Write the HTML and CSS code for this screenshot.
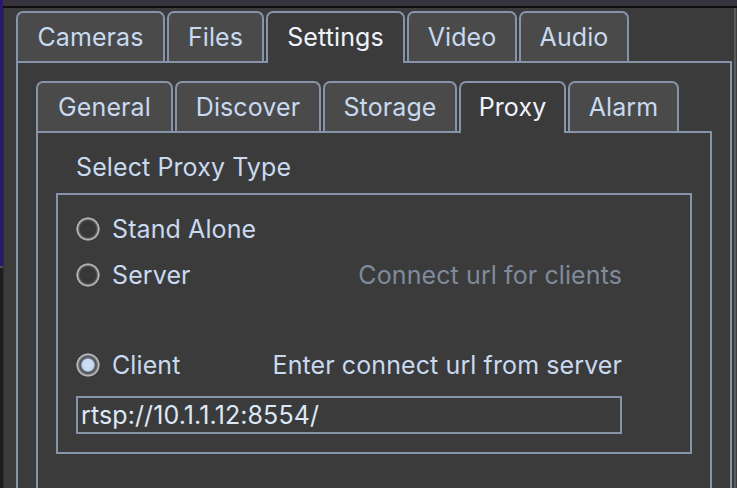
FILE: index.html
```html
<!DOCTYPE html>
<html>
<head>
<meta charset="utf-8">
<link rel="stylesheet" href="styles.css">
</head>
<body>
<div class="edge-left"><div class="edge-purple"></div><div class="edge-dark"></div></div>
<div class="app">
  <div class="titlebar"></div>
  <div class="workspace">
    <div class="content">
      <div class="tabs main-tabs">
        <div class="tab">Cameras</div>
        <div class="tab">Files</div>
        <div class="tab selected">Settings</div>
        <div class="tab">Video</div>
        <div class="tab">Audio</div>
      </div>
      <div class="pane outer-pane">
        <div class="tabs sub-tabs">
          <div class="tab">General</div>
          <div class="tab">Discover</div>
          <div class="tab">Storage</div>
          <div class="tab selected">Proxy</div>
          <div class="tab">Alarm</div>
        </div>
        <div class="pane inner-pane">
          <div class="group-title">Select Proxy Type</div>
          <div class="group">
            <div class="row"><span class="option"><span class="radio"></span><span class="label">Stand Alone</span></span></div>
            <div class="row"><span class="option"><span class="radio"></span><span class="label">Server</span></span><span class="hint disabled">Connect url for clients</span></div>
            <div class="row spacer"></div>
            <div class="row"><span class="option"><span class="radio checked"></span><span class="label">Client</span></span><span class="hint">Enter connect url from server</span></div>
            <input class="url" type="text" value="rtsp://10.1.1.12:8554/">
          </div>
        </div>
      </div>
    </div>
    <div class="edge-right"></div>
  </div>
</div>
</body>
</html>
```
FILE: styles.css
```css
html, body {
  margin: 0;
  padding: 0;
}
body {
  width: 737px;
  height: 488px;
  overflow: hidden;
  background: #3b3b3b;
  display: flex;
  font-family: Inter, "Noto Sans", sans-serif;
  font-size: 25px;
  letter-spacing: 0.1px;
  color: #c8d9f0;
}
.edge-left {
  width: 3px;
  display: flex;
  flex-direction: column;
}
.edge-purple {
  height: 266px;
  background: #2a1478;
}
.edge-dark {
  flex: 1;
  background: #1e1c21;
  border-top: 2px solid #4e4e4e;
}
.app {
  flex: 1;
  display: flex;
  flex-direction: column;
  min-width: 0;
}
.titlebar {
  height: 6px;
  background: #37343d;
  border-bottom: 2px solid #0e0e0e;
  flex-shrink: 0;
}
.workspace {
  flex: 1;
  display: flex;
  border-left: 1px solid #2d2d2d;
  min-height: 0;
}
.content {
  flex: 1;
  display: flex;
  flex-direction: column;
  padding: 3px 2px 0 12px;
  min-width: 0;
}
.edge-right {
  width: 1px;
  border-left: 2px solid #5b5b5b;
}
.tabs {
  display: flex;
  gap: 2px;
  align-items: flex-end;
  flex-shrink: 0;
}
.tab {
  box-sizing: border-box;
  height: 50px;
  line-height: 49px;
  padding: 0;
  text-align: center;
  border: 2px solid #8594a9;
  border-bottom: 0;
  border-radius: 7px 7px 0 0;
  background: #4a4a4a;
  color: #c8d9f0;
  white-space: nowrap;
}
.main-tabs .tab:nth-child(1) { width: 149px; }
.main-tabs .tab:nth-child(2) { width: 97px; }
.main-tabs .tab:nth-child(3) { width: 139px; }
.main-tabs .tab:nth-child(4) { width: 110px; }
.main-tabs .tab:nth-child(5) { width: 110px; }
.sub-tabs .tab:nth-child(1) { width: 137px; }
.sub-tabs .tab:nth-child(2) { width: 146px; }
.sub-tabs .tab:nth-child(3) { width: 134px; }
.sub-tabs .tab:nth-child(4) { width: 107px; }
.sub-tabs .tab:nth-child(5) { width: 111px; }
.tab.selected {
  background: #3b3b3b;
  color: #eff4fb;
  height: 52px;
  padding-bottom: 2px;
  margin-bottom: -2px;
  position: relative;
  z-index: 1;
}
.pane {
  flex: 1;
  border: 2px solid #8594a9;
  border-bottom: 0;
  background: #3b3b3b;
  display: flex;
  flex-direction: column;
}
.outer-pane {
  padding: 18px 18px 0;
}
.inner-pane {
  padding: 19px 18px 0;
}
.group-title {
  line-height: 30px;
  margin: 0 0 11px 20px;
}
.group {
  border: 2px solid #8594a9;
  padding: 11px 68px 18px 18px;
  display: flex;
  flex-direction: column;
}
.row {
  height: 46px;
  display: flex;
  align-items: center;
  justify-content: space-between;
}
.row.spacer {
  height: 44px;
}
.option {
  display: flex;
  align-items: center;
  gap: 12px;
}
.radio {
  width: 24px;
  height: 24px;
  border-radius: 50%;
  background: radial-gradient(circle closest-side, #383838 0, #383838 68%, #5f5f5f 76%, #b4b8be 88%, #9a9a9a 95%, rgba(80,80,80,0) 100%);
}
.radio.checked {
  background: radial-gradient(circle closest-side, #d0e2f8 0, #c6d9f3 48%, #6b7483 58%, #4a4a4a 68%, #8e9298 82%, #bfc2c6 90%, #8a8a8a 96%, rgba(80,80,80,0) 100%);
}
.hint {
  color: #c8d9f0;
}
.hint.disabled {
  color: #7e8b9c;
}
.url {
  margin-top: 8px;
  box-sizing: border-box;
  width: 546px;
  height: 38px;
  border: 2px solid #8594a9;
  background: transparent;
  padding: 0 3px;
  font-family: Inter, "Noto Sans", sans-serif;
  font-size: 25px;
  letter-spacing: 0.1px;
  color: #dde8f7;
  outline: none;
  border-radius: 0;
}
```
